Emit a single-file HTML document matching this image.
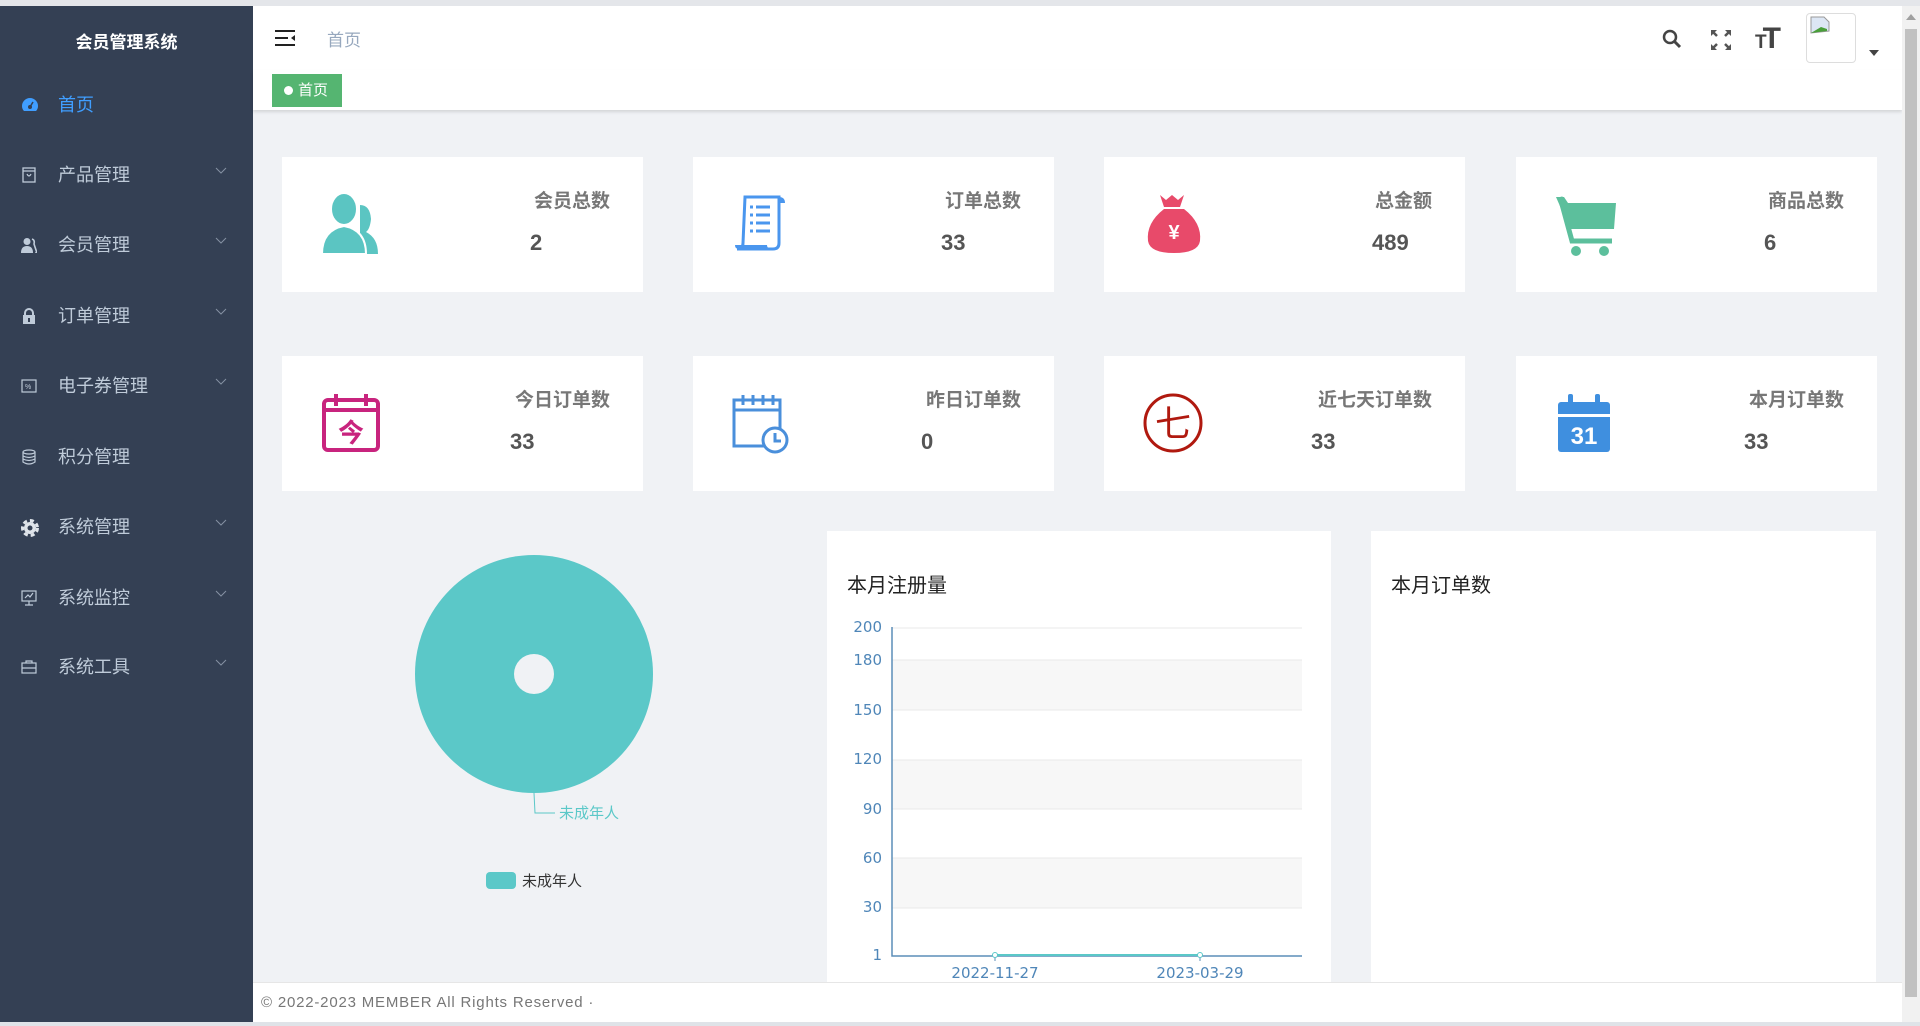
<!DOCTYPE html>
<html><head><meta charset="utf-8">
<style>
*{margin:0;padding:0;box-sizing:border-box}
body{width:1920px;height:1026px;overflow:hidden;background:#f0f2f5;font-family:"Liberation Sans","Noto Sans CJK SC",sans-serif;position:relative}
.abs{position:absolute}
#topline{left:0;top:0;width:1920px;height:6px;background:#e4e6ea}
#side{left:0;top:6px;width:253px;height:1016px;background:#344054}
#side .title{position:absolute;left:0;width:253px;top:22px;text-align:center;color:#fff;font-weight:bold;font-size:17px}
.mi{position:absolute;left:0;width:253px;height:40px;color:#bfcbd9;font-size:18px;line-height:40px}
.mi span{position:absolute;left:58px}
.mi svg.ic{position:absolute;left:21px;top:12px}
.mi .ar{position:absolute;left:215px;top:12px}
#hdr{left:253px;top:6px;width:1649px;height:64px;background:#fff}
#tags{left:253px;top:70px;width:1649px;height:40px;background:#fff;box-shadow:0 2px 3px rgba(0,0,0,.12)}
.card{position:absolute;background:#fff;width:361px;height:135px}
.card .t{position:absolute;right:33px;top:29px;font-size:19px;font-weight:bold;color:#777}
.card .v{position:absolute;top:73px;font-size:22px;font-weight:bold;color:#555}
.card svg{position:absolute;left:38px;top:36px}
.panel{position:absolute;background:#fff;top:531px;height:451px}
#foot{left:253px;top:982px;width:1649px;height:40px;background:#fff;border-top:1px solid #e6e6e6;color:#777;font-size:15px;letter-spacing:.8px;padding:11px 8px}
#sb{left:1902px;top:6px;width:18px;height:1016px;background:#f1f1f1}
</style></head><body>
<div class="abs" id="topline"></div>
<div class="abs" id="side">
<div class="title">会员管理系统</div>
<div class="mi" style="top:79px;color:#409eff"><svg class="ic" width="18" height="16" viewBox="0 0 18 16"><path d="M9 1A8 8 0 0 0 1 9c0 2 .7 3.7 2 5h12c1.3-1.3 2-3 2-5a8 8 0 0 0-8-8z" fill="#409eff"/><circle cx="9" cy="10" r="2" fill="#344054"/><path d="M9 10 12 5" stroke="#344054" stroke-width="1.5"/></svg><span>首页</span></div>
<div class="mi" style="top:149px"><svg class="ic" width="16" height="16"><rect x="2" y="1" width="12" height="14" fill="none" stroke="#bfcbd9" stroke-width="1.3"/><path d="M2 4h12M6 7q2 4 4 0" fill="none" stroke="#bfcbd9" stroke-width="1.2"/></svg><span>产品管理</span><svg class="ar" width="12" height="8"><path d="M1 1l5 5 5-5" fill="none" stroke="#8591a3"/></svg></div>
<div class="mi" style="top:219px"><svg class="ic" width="16" height="16"><circle cx="6" cy="4.5" r="3.5" fill="#bfcbd9"/><path d="M0 16q0-7 6-7t6 7z" fill="#bfcbd9"/><path d="M11 2q3 1 2 5l3 9h-2" fill="none" stroke="#bfcbd9" stroke-width="1.6"/></svg><span>会员管理</span><svg class="ar" width="12" height="8"><path d="M1 1l5 5 5-5" fill="none" stroke="#8591a3"/></svg></div>
<div class="mi" style="top:290px"><svg class="ic" width="16" height="16"><path d="M4 7V5a4 4 0 0 1 8 0v2" fill="none" stroke="#bfcbd9" stroke-width="2"/><rect x="2" y="7" width="12" height="9" fill="#bfcbd9"/><rect x="7" y="10" width="2" height="4" fill="#344054"/></svg><span>订单管理</span><svg class="ar" width="12" height="8"><path d="M1 1l5 5 5-5" fill="none" stroke="#8591a3"/></svg></div>
<div class="mi" style="top:360px"><svg class="ic" width="16" height="16"><rect x="1" y="2" width="14" height="12" fill="none" stroke="#bfcbd9" stroke-width="1.2"/><text x="4" y="11" font-size="7" fill="#bfcbd9">%</text></svg><span>电子券管理</span><svg class="ar" width="12" height="8"><path d="M1 1l5 5 5-5" fill="none" stroke="#8591a3"/></svg></div>
<div class="mi" style="top:431px"><svg class="ic" width="16" height="16"><ellipse cx="8" cy="3" rx="6" ry="2" fill="none" stroke="#bfcbd9" stroke-width="1.2"/><path d="M2 3v10q6 4 12 0V3M2 7q6 3 12 0M2 10q6 3 12 0" fill="none" stroke="#bfcbd9" stroke-width="1.2"/></svg><span>积分管理</span></div>
<div class="mi" style="top:501px"><svg class="ic" width="18" height="18" viewBox="0 0 18 18"><circle cx="9" cy="9" r="6" fill="#dfe4ea"/><circle cx="9" cy="9" r="7.5" fill="none" stroke="#dfe4ea" stroke-width="3" stroke-dasharray="4 3"/><circle cx="9" cy="9" r="2.5" fill="#344054"/></svg><span>系统管理</span><svg class="ar" width="12" height="8"><path d="M1 1l5 5 5-5" fill="none" stroke="#8591a3"/></svg></div>
<div class="mi" style="top:572px"><svg class="ic" width="16" height="16"><rect x="1" y="1" width="14" height="10" fill="none" stroke="#bfcbd9" stroke-width="1.2"/><path d="M4 8l3-3 2 2 3-4M8 11v4M4 15h8" fill="none" stroke="#bfcbd9" stroke-width="1.2"/></svg><span>系统监控</span><svg class="ar" width="12" height="8"><path d="M1 1l5 5 5-5" fill="none" stroke="#8591a3"/></svg></div>
<div class="mi" style="top:641px"><svg class="ic" width="16" height="16"><rect x="1" y="4" width="14" height="10" fill="none" stroke="#bfcbd9" stroke-width="1.2"/><path d="M5 4V2h6v2M1 9h14" fill="none" stroke="#bfcbd9" stroke-width="1.2"/></svg><span>系统工具</span><svg class="ar" width="12" height="8"><path d="M1 1l5 5 5-5" fill="none" stroke="#8591a3"/></svg></div>
</div>
<div class="abs" id="hdr">
<svg class="abs" style="left:22px;top:24px" width="20" height="16"><path d="M0 1h20M0 8h13M0 15h20" stroke="#222" stroke-width="2"/><path d="M20 5l-4 3 4 3z" fill="#222"/></svg>
<div class="abs" style="left:74px;top:20px;font-size:17px;color:#97a8be">首页</div>
<svg class="abs" style="left:1408px;top:22px" width="22" height="22"><circle cx="9" cy="9" r="6" fill="none" stroke="#444" stroke-width="2.5"/><path d="M13 13l6 6" stroke="#444" stroke-width="3"/></svg>
<svg class="abs" style="left:1456px;top:22px" width="24" height="24"><path d="M2 2h6L2 8zM22 2h-6l6 6zM2 22h6L2 16zM22 22h-6l6-6z" fill="#555"/><path d="M3 3l5 5M21 3l-5 5M3 21l5-5M21 21l-5-5" stroke="#555" stroke-width="2.5"/></svg>
<div class="abs" style="left:1502px;top:16px;font-size:30px;font-weight:bold;color:#444;letter-spacing:-4px"><span style="font-size:19px">T</span>T</div>
<div class="abs" style="left:1553px;top:7px;width:50px;height:50px;border:1px solid #ddd;border-radius:4px;background:#fff"><svg width="22" height="22" style="margin:2px"><path d="M2 1h13l5 5v9L2 17z" fill="#dde7f5" stroke="#999"/><path d="M2 17l10-6 6 2v2z" fill="#4a9f3a"/></svg></div>
<svg class="abs" style="left:1616px;top:44px" width="10" height="6"><path d="M0 0h10L5 6z" fill="#444"/></svg>
</div>
<div class="abs" id="tags"><div class="abs" style="left:19px;top:4px;width:70px;height:33px;background:#55b571;color:#fff;font-size:15px;line-height:33px;padding-left:12px"><span style="display:inline-block;width:9px;height:9px;border-radius:50%;background:#fff;margin-right:5px"></span>首页</div></div>

<div class="card" style="left:282px;top:157px"><svg width="62" height="62" viewBox="0 0 62 62"><path d="M40 12q10 0 11 14-1 10-5 13 12 6 12 22H40z" fill="#5bc5c2"/><ellipse cx="24" cy="16" rx="13" ry="16" fill="#5bc5c2" stroke="#fff" stroke-width="2"/><path d="M2 61q0-24 22-28 22 4 22 28z" fill="#5bc5c2" stroke="#fff" stroke-width="2"/></svg><div class="t">会员总数</div><div class="v" style="left:248px">2</div></div>
<div class="card" style="left:693px;top:157px"><svg width="62" height="62" viewBox="0 0 62 62"><path d="M14 4h34v46q0 6-6 6H6q6 0 6-6z" fill="#fff" stroke="#4a96ee" stroke-width="3"/><path d="M48 4q6 0 6 6h-6" fill="#4a96ee"/><path d="M4 52h32q0 4 6 4H8q-4 0-4-4z" fill="#4a96ee"/><path d="M19 14h3M25 14h14M19 22h3M25 22h14M19 30h3M25 30h14M19 38h3M25 38h14" stroke="#4a96ee" stroke-width="3"/></svg><div class="t">订单总数</div><div class="v" style="left:248px">33</div></div>
<div class="card" style="left:1104px;top:157px"><svg width="62" height="62" viewBox="0 0 62 62"><path d="M18 2l6 5 6-5 6 5 6-5-4 12H22z" fill="#e84a6a"/><path d="M22 16h20q18 14 16 32-2 12-26 12T6 48q-2-18 16-32z" fill="#e84a6a"/><text x="32" y="46" text-anchor="middle" font-size="20" font-weight="bold" fill="#fff">¥</text></svg><div class="t">总金额</div><div class="v" style="left:268px">489</div></div>
<div class="card" style="left:1516px;top:157px"><svg width="66" height="66" viewBox="0 0 66 66"><path d="M2 4h8l4 6h48l-2 26H16z" fill="#5cbf9c"/><path d="M6 4l12 44h40" fill="none" stroke="#5cbf9c" stroke-width="5"/><circle cx="22" cy="58" r="5" fill="#5cbf9c"/><circle cx="50" cy="58" r="5" fill="#5cbf9c"/></svg><div class="t">商品总数</div><div class="v" style="left:248px">6</div></div>

<div class="card" style="left:282px;top:356px"><svg width="62" height="62" viewBox="0 0 62 62"><rect x="4" y="8" width="54" height="50" rx="4" fill="#fff" stroke="#c8247e" stroke-width="4"/><path d="M4 18h54M16 2v12M46 2v12" stroke="#c8247e" stroke-width="4"/><text x="31" y="50" text-anchor="middle" font-size="26" font-weight="bold" fill="#c8247e" font-family="Noto Sans CJK SC">今</text></svg><div class="t">今日订单数</div><div class="v" style="left:228px">33</div></div>
<div class="card" style="left:693px;top:356px"><svg width="62" height="62" viewBox="0 0 62 62"><rect x="3" y="8" width="46" height="46" fill="#fff" stroke="#4a8fdb" stroke-width="3"/><path d="M3 18h46M12 3v10M22 3v10M32 3v10M42 3v10" stroke="#4a8fdb" stroke-width="3"/><circle cx="44" cy="48" r="12" fill="#fff" stroke="#4a8fdb" stroke-width="3"/><path d="M44 41v8h6" fill="none" stroke="#4a8fdb" stroke-width="3"/></svg><div class="t">昨日订单数</div><div class="v" style="left:228px">0</div></div>
<div class="card" style="left:1104px;top:356px"><svg width="62" height="62" viewBox="0 0 62 62"><circle cx="31" cy="31" r="28" fill="none" stroke="#b0190f" stroke-width="3"/><text x="31" y="44" text-anchor="middle" font-size="36" fill="#b0190f" font-family="Noto Sans CJK SC">七</text></svg><div class="t">近七天订单数</div><div class="v" style="left:207px">33</div></div>
<div class="card" style="left:1516px;top:356px"><svg width="62" height="62" viewBox="0 0 62 62"><rect x="4" y="10" width="52" height="50" rx="3" fill="#3f8fdf"/><rect x="4" y="22" width="52" height="3" fill="#fff"/><rect x="14" y="2" width="5" height="12" rx="2" fill="#3f8fdf"/><rect x="41" y="2" width="5" height="12" rx="2" fill="#3f8fdf"/><text x="30" y="52" text-anchor="middle" font-size="24" font-weight="bold" fill="#fff">31</text></svg><div class="t">本月订单数</div><div class="v" style="left:228px">33</div></div>

<svg class="abs" style="left:380px;top:540px" width="320" height="370">
<circle cx="154" cy="134" r="119" fill="#5bc8c8"/>
<circle cx="154" cy="134" r="20" fill="#f0f2f5"/>
<path d="M154 253l1 20h20" fill="none" stroke="#5bc8c8"/>
<text x="179" y="278" font-size="15" fill="#5bc8c8" font-family="Noto Sans CJK SC">未成年人</text>
<rect x="106" y="332" width="30" height="17" rx="4" fill="#5bc8c8"/>
<text x="142" y="346" font-size="15" fill="#333" font-family="Noto Sans CJK SC">未成年人</text>
</svg>

<div class="panel" style="left:827px;width:504px">
<div class="abs" style="left:20px;top:38px;font-size:20px;color:#222">本月注册量</div>
<svg class="abs" style="left:0;top:0" width="504" height="451">
<g transform="translate(-827,-531)">
<rect x="892" y="660" width="410" height="50" fill="#f7f7f7"/>
<rect x="892" y="760" width="410" height="49" fill="#f7f7f7"/>
<rect x="892" y="858" width="410" height="50" fill="#f7f7f7"/>
<g stroke="#e8e8e8"><path d="M892 628H1302M892 660H1302M892 710H1302M892 760H1302M892 809H1302M892 858H1302M892 908H1302"/></g>
<path d="M892 627V956H1302" fill="none" stroke="#5b8db8" stroke-width="1.5"/>
<path d="M995 956v5M1200 956v5" stroke="#5b8db8"/>
<path d="M995 955H1200" stroke="#5bc8c8" stroke-width="2"/>
<circle cx="995" cy="955" r="2.5" fill="#fff" stroke="#5bc8c8"/><circle cx="1200" cy="955" r="2.5" fill="#fff" stroke="#5bc8c8"/>
<g font-size="15" fill="#4f86b8" text-anchor="end" font-family="DejaVu Sans">
<text x="882" y="632">200</text><text x="882" y="665">180</text><text x="882" y="715">150</text><text x="882" y="764">120</text><text x="882" y="814">90</text><text x="882" y="863">60</text><text x="882" y="912">30</text><text x="882" y="960">1</text>
</g>
<g font-size="15" fill="#4f86b8" text-anchor="middle" font-family="DejaVu Sans"><text x="995" y="978">2022-11-27</text><text x="1200" y="978">2023-03-29</text></g>
</g></svg>
</div>
<div class="panel" style="left:1371px;width:505px"><div class="abs" style="left:20px;top:38px;font-size:20px;color:#222">本月订单数</div></div>

<div class="abs" id="foot">© 2022-2023 MEMBER All Rights Reserved ·</div>
<div class="abs" style="left:0;top:1022px;width:1920px;height:4px;background:#dfe3e8"></div>
<div class="abs" id="sb"><div style="position:absolute;left:3px;top:23px;width:12px;height:968px;background:#c1c1c1"></div><svg style="position:absolute;left:4px;top:8px" width="10" height="6"><path d="M0 6h10L5 0z" fill="#a0a0a0"/></svg></div>
</body></html>
